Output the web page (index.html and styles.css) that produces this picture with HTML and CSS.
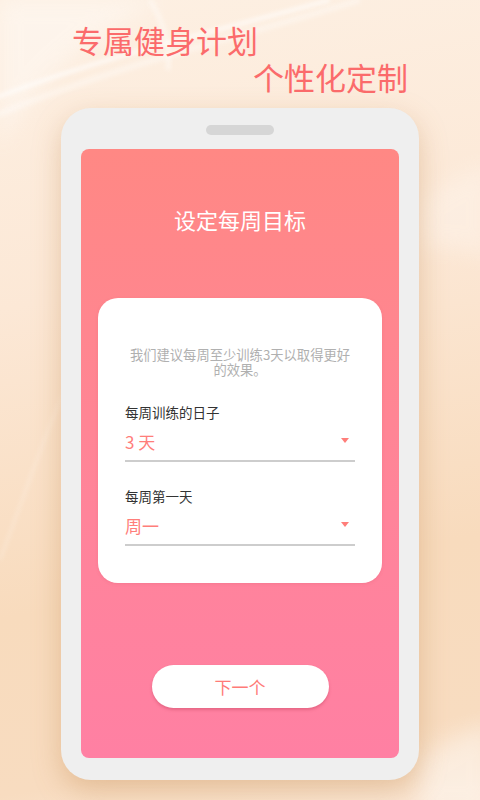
FILE: index.html
```html
<!DOCTYPE html>
<html lang="zh-CN">
<head>
<meta charset="utf-8">
<title>设定每周目标</title>
<link rel="stylesheet" href="styles.css">
</head>
<body>
<div class="page">
  <svg class="deco" width="480" height="800" viewBox="0 0 480 800" aria-hidden="true">
    <defs>
      <filter id="blur" x="-20%" y="-20%" width="140%" height="140%"><feGaussianBlur stdDeviation="2"/></filter>
      <filter id="blur2" x="-20%" y="-20%" width="140%" height="140%"><feGaussianBlur stdDeviation="10"/></filter>
    </defs>
    <path d="M0 150 Q 40 60 160 0 L 0 0 Z" fill="#fff" opacity="0.35" filter="url(#blur2)"/>
    <path d="M-10 100 C 90 60 220 30 330 0" stroke="#fff" stroke-width="3" fill="none" opacity="0.85" filter="url(#blur)"/>
    <path d="M-10 118 C 100 70 230 40 360 0" stroke="#fff" stroke-width="6" fill="none" opacity="0.35" filter="url(#blur)"/>
    <path d="M150 0 C 165 25 170 45 168 70" stroke="#fff" stroke-width="5" fill="none" opacity="0.4" filter="url(#blur)"/>
    <path d="M420 200 C 450 180 470 170 490 165 L 490 260 C 470 250 450 245 420 250 Z" fill="#fff" opacity="0.25" filter="url(#blur2)"/>
    <path d="M0 560 C 30 480 50 420 70 380" stroke="#fff" stroke-width="2" fill="none" opacity="0.3" filter="url(#blur)"/>
    <path d="M420 760 C 450 740 470 730 490 725 L 490 810 L 420 810 Z" fill="#fff" opacity="0.35" filter="url(#blur2)"/>
  </svg>

  <header class="slogan">
    <div class="slogan-line one">专属健身计划</div>
    <div class="slogan-line two">个性化定制</div>
  </header>

  <div class="phone">
    <div class="speaker"></div>
    <div class="screen">
      <h1 class="title">设定每周目标</h1>
      <div class="card">
        <p class="desc">我们建议每周至少训练3天以取得更好的效果。</p>
        <div class="field">
          <div class="label">每周训练的日子</div>
          <div class="select"><span class="value">3 天</span><span class="caret"></span></div>
        </div>
        <div class="field second">
          <div class="label">每周第一天</div>
          <div class="select"><span class="value">周一</span><span class="caret"></span></div>
        </div>
      </div>
      <button class="next" type="button">下一个</button>
    </div>
  </div>
</div>
</body>
</html>
```

FILE: styles.css
```css
* { box-sizing: border-box; }

html, body {
  margin: 0;
  padding: 0;
}

body {
  font-family: "Noto Sans CJK SC", "Noto Sans", "Liberation Sans", sans-serif;
}

.page {
  position: relative;
  width: 480px;
  height: 800px;
  overflow: hidden;
  background: linear-gradient(170deg, #fdf0e3 0%, #fce8d6 35%, #f8dbbd 70%, #f8dcc0 90%, #fbe8d6 100%);
}

.deco {
  position: absolute;
  left: 0;
  top: 0;
  z-index: 0;
}

.slogan {
  position: relative;
  z-index: 1;
  padding-top: 22px;
  color: #fb6b6b;
  font-size: 31px;
  line-height: 36px;
  font-weight: 400;
}

.slogan-line.one {
  padding-left: 72px;
}

.slogan-line.two {
  margin-top: 1px;
  padding-left: 253px;
}

.phone {
  position: relative;
  z-index: 1;
  margin-top: 13px;
  margin-left: 61px;
  width: 358px;
  height: 672px;
  padding: 17px 20px 22px;
  background: #efefef;
  border-radius: 30px;
  box-shadow: 0 10px 28px rgba(190, 130, 70, 0.35);
  display: flex;
  flex-direction: column;
  align-items: center;
}

.speaker {
  width: 68px;
  height: 10px;
  border-radius: 5px;
  background: #d6d6d6;
}

.screen {
  margin-top: 14px;
  width: 318px;
  height: 609px;
  border-radius: 8px;
  background: linear-gradient(180deg, #ff8884 0%, #ff849a 60%, #ff80a3 100%);
  padding-top: 55px;
  display: flex;
  flex-direction: column;
  align-items: center;
}

.title {
  margin: 0;
  color: #ffffff;
  font-size: 22px;
  line-height: 30px;
  font-weight: 400;
}

.card {
  margin-top: 64px;
  width: 284px;
  background: #ffffff;
  border-radius: 20px;
  padding: 49px 27px 37px;
  box-shadow: 0 1px 3px rgba(220, 90, 110, 0.25);
}

.desc {
  margin: 0 3px;
  text-align: center;
  color: #b0b0b0;
  font-size: 13.3px;
  line-height: 15px;
}

.field {
  margin-top: 26px;
}

.field.second {
  margin-top: 25px;
}

.label {
  color: #333333;
  font-size: 13.5px;
  line-height: 18px;
}

.select {
  display: flex;
  justify-content: space-between;
  align-items: center;
  padding-top: 2px;
  height: 41px;
  border-bottom: 2px solid #cdcdcd;
}

.value {
  color: #ff7e7a;
  font-size: 17px;
  line-height: 30px;
}

.caret {
  width: 0;
  height: 0;
  margin-right: 6px;
  margin-top: -2px;
  border-left: 4.5px solid transparent;
  border-right: 4.5px solid transparent;
  border-top: 5px solid #ff7e7a;
}

.next {
  margin-top: 82px;
  width: 177px;
  height: 43px;
  border: none;
  border-radius: 22px;
  background: #ffffff;
  color: #ff7b78;
  font-family: inherit;
  font-size: 17px;
  line-height: 43px;
  padding: 0;
  box-shadow: 0 2px 3px rgba(200, 70, 100, 0.45);
}
```
